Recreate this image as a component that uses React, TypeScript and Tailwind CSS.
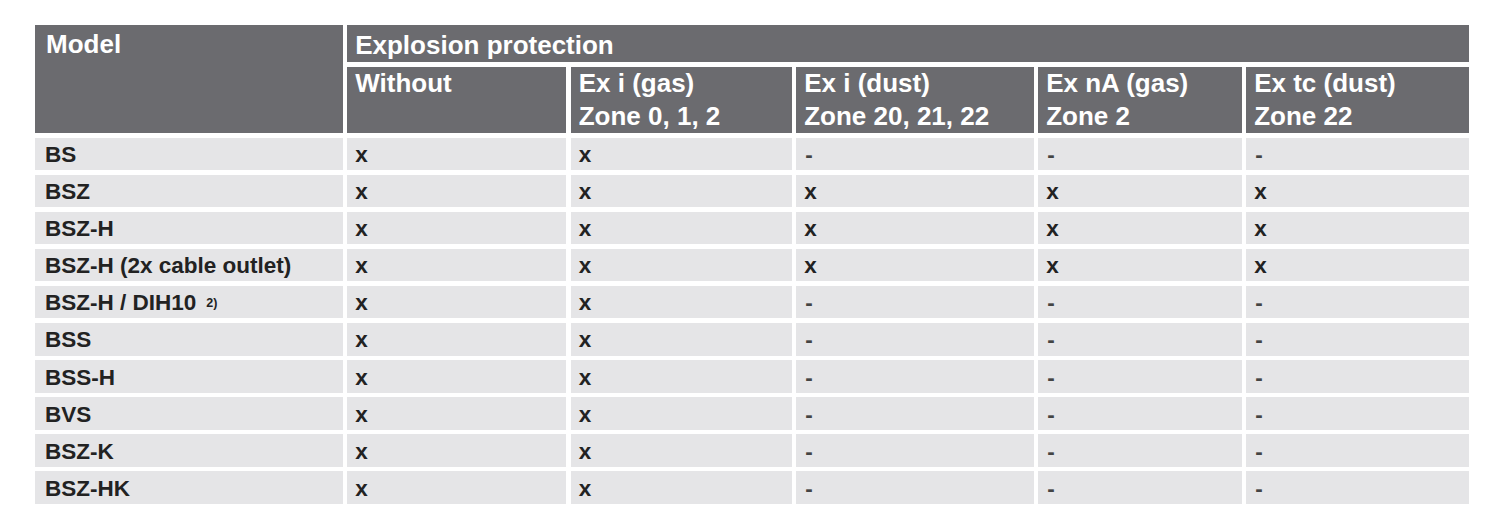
const rows: { model: string; sup?: string; vals: string[] }[] = [
  { model: "BS", vals: ["x", "x", "-", "-", "-"] },
  { model: "BSZ", vals: ["x", "x", "x", "x", "x"] },
  { model: "BSZ-H", vals: ["x", "x", "x", "x", "x"] },
  { model: "BSZ-H (2x cable outlet)", vals: ["x", "x", "x", "x", "x"] },
  { model: "BSZ-H / DIH10", sup: "2)", vals: ["x", "x", "-", "-", "-"] },
  { model: "BSS", vals: ["x", "x", "-", "-", "-"] },
  { model: "BSS-H", vals: ["x", "x", "-", "-", "-"] },
  { model: "BVS", vals: ["x", "x", "-", "-", "-"] },
  { model: "BSZ-K", vals: ["x", "x", "-", "-", "-"] },
  { model: "BSZ-HK", vals: ["x", "x", "-", "-", "-"] },
];

const subHeads = [
  ["Without"],
  ["Ex i (gas)", "Zone 0, 1, 2"],
  ["Ex i (dust)", "Zone 20, 21, 22"],
  ["Ex nA (gas)", "Zone 2"],
  ["Ex tc (dust)", "Zone 22"],
];

export default function App() {
  return (
    <main className="w-[1500px] h-[532px] bg-white pt-[25px] pl-[35px] font-[family-name:'Liberation_Sans',Arial,sans-serif]">
      <div className="grid grid-cols-[307.7px_219px_221px_237.5px_203.5px_223.1px] grid-rows-[37px_66.5px_repeat(10,32.6px)] gap-[4.5px] w-fit">
        {/* header */}
        <div className="row-span-2 bg-[#6b6b6f] text-white font-bold text-[26px] leading-[33px] pt-[3px] pl-[11px]">
          Model
        </div>
        <div className="col-span-5 bg-[#6b6b6f] text-white font-bold text-[26px] leading-[33px] pt-[4px] pl-[8px]">
          Explosion protection
        </div>
        {subHeads.map((lines, i) => (
          <div key={i} className="bg-[#6b6b6f] text-white font-bold text-[26px] leading-[33px] pl-[8px]">
            {lines.map((l) => (
              <div key={l}>{l}</div>
            ))}
          </div>
        ))}

        {/* body */}
        {rows.map((r) => (
          <>
            <div key={r.model} className="bg-[#e5e5e7] text-[#222] font-bold text-[22.5px] leading-[32.6px] pt-[1.5px] pl-[10px] whitespace-nowrap">
              {r.model}
              {r.sup && <sup className="text-[12.5px] ml-[10px] relative top-[-3px]">{r.sup}</sup>}
            </div>
            {r.vals.map((v, j) => (
              <div
                key={r.model + j}
                className={
                  v === "x"
                    ? "bg-[#e5e5e7] text-[#222] font-bold text-[22.5px] leading-[32.6px] pt-[1.5px] pl-[8px]"
                    : "bg-[#e5e5e7] text-[#444] font-bold text-[22.5px] leading-[32.6px] pt-[1.5px] pl-[9px]"
                }
              >
                {v}
              </div>
            ))}
          </>
        ))}
      </div>
    </main>
  );
}
